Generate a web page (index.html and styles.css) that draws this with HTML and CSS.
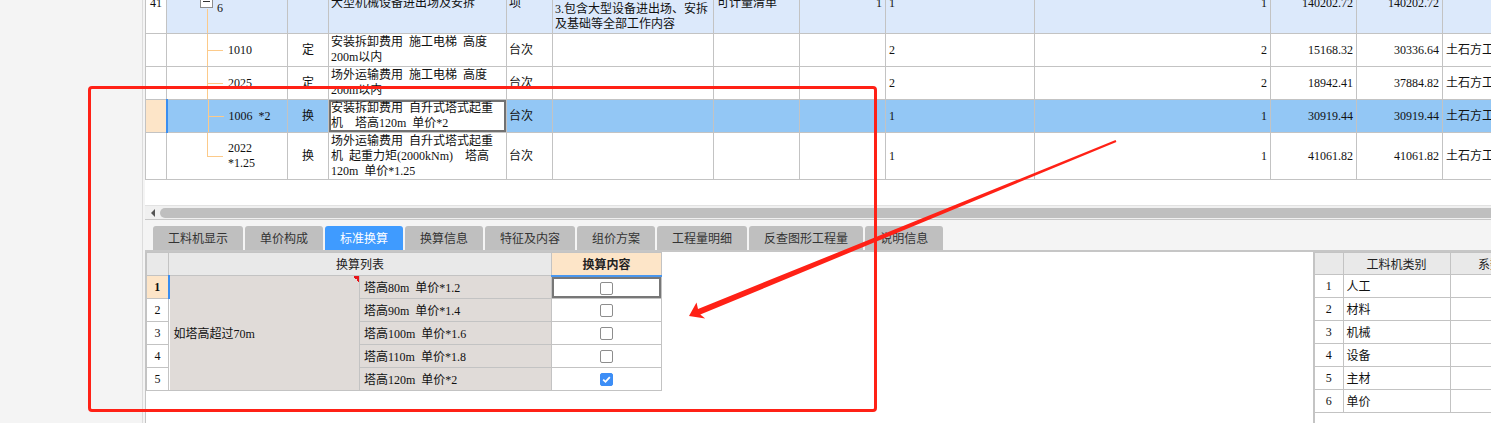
FILE: index.html
```html
<!DOCTYPE html>
<html lang="zh-CN">
<head>
    <meta charset="UTF-8">
    <title>标准换算</title>
    <link rel="stylesheet" href="styles.css">
</head>
<body>
<div class="app">
    <div class="side"></div>

    <div class="main">
        <div class="grid-top">
            <table class="sheet">
                <colgroup>
                    <col class="c-no"><col class="c-code"><col class="c-type"><col class="c-name">
                    <col class="c-unit"><col class="c-desc"><col class="c-spec"><col class="c-qty0">
                    <col class="c-expr"><col class="c-qty"><col class="c-price"><col class="c-total">
                    <col class="c-major">
                </colgroup>
                <tr class="r-group">
                    <td class="rn">41</td>
                    <td class="code root"><div class="tree-root"><span class="fold"></span><span class="root-tail">6</span></div></td>
                    <td></td>
                    <td>大型机械设备进出场及安拆</td>
                    <td>项</td>
                    <td class="desc">2.大型机械设备进出场<br>3.包含大型设备进出场、安拆<br>及基础等全部工作内容</td>
                    <td class="spec">可计量清单</td>
                    <td class="num">1</td>
                    <td class="expr">1</td>
                    <td class="num">1</td>
                    <td class="num">140202.72</td>
                    <td class="num">140202.72</td>
                    <td></td>
                </tr>
                <tr class="r-item">
                    <td class="rn"></td>
                    <td class="code branch">1010</td>
                    <td class="type">定</td>
                    <td>安装拆卸费用 施工电梯 高度<br>200m以内</td>
                    <td>台次</td>
                    <td></td><td></td><td></td>
                    <td class="expr">2</td>
                    <td class="num">2</td>
                    <td class="num">15168.32</td>
                    <td class="num">30336.64</td>
                    <td class="major">土石方工程</td>
                </tr>
                <tr class="r-item">
                    <td class="rn"></td>
                    <td class="code branch">2025</td>
                    <td class="type">定</td>
                    <td>场外运输费用 施工电梯 高度<br>200m以内</td>
                    <td>台次</td>
                    <td></td><td></td><td></td>
                    <td class="expr">2</td>
                    <td class="num">2</td>
                    <td class="num">18942.41</td>
                    <td class="num">37884.82</td>
                    <td class="major">土石方工程</td>
                </tr>
                <tr class="r-item r-sel">
                    <td class="rn rn-cur"></td>
                    <td class="code branch">1006 *2</td>
                    <td class="type">换</td>
                    <td class="editing">安装拆卸费用 自升式塔式起重<br>机&nbsp; 塔高120m 单价*2</td>
                    <td>台次</td>
                    <td></td><td></td><td></td>
                    <td class="expr">1</td>
                    <td class="num">1</td>
                    <td class="num">30919.44</td>
                    <td class="num">30919.44</td>
                    <td class="major">土石方工程</td>
                </tr>
                <tr class="r-tall">
                    <td class="rn"></td>
                    <td class="code branch-last">2022<br>*1.25</td>
                    <td class="type">换</td>
                    <td>场外运输费用 自升式塔式起重<br>机 起重力矩(2000kNm)&nbsp; 塔高<br>120m 单价*1.25</td>
                    <td>台次</td>
                    <td></td><td></td><td></td>
                    <td class="expr">1</td>
                    <td class="num">1</td>
                    <td class="num">41061.82</td>
                    <td class="num">41061.82</td>
                    <td class="major">土石方工程</td>
                </tr>
            </table>
        </div>

        <div class="hscroll">
            <span class="hs-left"></span>
            <span class="hs-thumb"></span>
        </div>

        <div class="tabs">
            <span class="tab">工料机显示</span>
            <span class="tab">单价构成</span>
            <span class="tab active">标准换算</span>
            <span class="tab">换算信息</span>
            <span class="tab">特征及内容</span>
            <span class="tab">组价方案</span>
            <span class="tab">工程量明细</span>
            <span class="tab">反查图形工程量</span>
            <span class="tab">说明信息</span>
        </div>

        <div class="lower">
            <div class="lower-left">
                <table class="conv">
                    <colgroup>
                        <col class="cv-no"><col class="cv-group"><col class="cv-item"><col class="cv-check">
                    </colgroup>
                    <tr>
                        <th></th>
                        <th colspan="2">换算列表</th>
                        <th class="th-cur">换算内容</th>
                    </tr>
                    <tr>
                        <td class="rn rn-cur">1</td>
                        <td class="group" rowspan="5">如塔高超过70m</td>
                        <td class="item">塔高80m 单价*1.2</td>
                        <td class="check cell-cur"><span class="box"></span></td>
                    </tr>
                    <tr>
                        <td class="rn">2</td>
                        <td class="item">塔高90m 单价*1.4</td>
                        <td class="check"><span class="box"></span></td>
                    </tr>
                    <tr>
                        <td class="rn">3</td>
                        <td class="item">塔高100m 单价*1.6</td>
                        <td class="check"><span class="box"></span></td>
                    </tr>
                    <tr>
                        <td class="rn">4</td>
                        <td class="item">塔高110m 单价*1.8</td>
                        <td class="check"><span class="box"></span></td>
                    </tr>
                    <tr>
                        <td class="rn">5</td>
                        <td class="item">塔高120m 单价*2</td>
                        <td class="check">
                            <span class="box on">
                                <svg width="11" height="11" viewBox="0 0 11 11"><path d="M2.2 5.6 L4.5 7.8 L8.8 3.2" fill="none" stroke="#fff" stroke-width="1.8"/></svg>
                            </span>
                        </td>
                    </tr>
                </table>
            </div>

            <div class="lower-right">
                <table class="kind">
                    <colgroup>
                        <col class="k-no"><col class="k-name"><col class="k-rate">
                    </colgroup>
                    <tr><th></th><th>工料机类别</th><th>系数</th></tr>
                    <tr><td class="rn">1</td><td>人工</td><td></td></tr>
                    <tr><td class="rn">2</td><td>材料</td><td></td></tr>
                    <tr><td class="rn">3</td><td>机械</td><td></td></tr>
                    <tr><td class="rn">4</td><td>设备</td><td></td></tr>
                    <tr><td class="rn">5</td><td>主材</td><td></td></tr>
                    <tr><td class="rn">6</td><td>单价</td><td></td></tr>
                </table>
            </div>
        </div>
    </div>

    <!-- red markup drawn over the screenshot -->
    <div class="mark-box"></div>
    <svg class="mark-arrow" width="1491" height="423" viewBox="0 0 1491 423">
        <polygon points="689,316 696.5,302.6 698,309 1115.6,140.1 1116.4,141.9 700.3,314.6 705.2,318.5" fill="#ff2116"/>
    </svg>
</div>
</body>
</html>
```

FILE: styles.css
```css
* {
    margin: 0;
    padding: 0;
    box-sizing: border-box;
}

body {
    width: 1491px;
    height: 423px;
    overflow: hidden;
    background: #fff;
    color: #111;
    font-family: "Liberation Serif", "Noto Sans CJK SC", serif;
    font-size: 12px;
}

.app {
    position: relative;
    display: flex;
    height: 423px;
}

.side {
    width: 145px;
    flex-shrink: 0;
    background: linear-gradient(to right, #f4f4f4 142px, #dcdcdc 142px, #dcdcdc 143px, #f4f4f4 143px);
}

.main {
    flex: 1;
    min-width: 0;
    display: flex;
    flex-direction: column;
    overflow: hidden;
}

/* ---------- top sheet ---------- */

.grid-top {
    height: 205px;
    flex-shrink: 0;
    overflow: hidden;
}

.sheet {
    border-collapse: collapse;
    table-layout: fixed;
    width: 1377px;
    margin-top: -27px;
    word-spacing: 3px;
}

.c-no { width: 21px; }
.c-code { width: 121px; }
.c-type { width: 41px; }
.c-name { width: 178px; }
.c-unit { width: 46px; }
.c-desc { width: 161px; }
.c-spec { width: 86px; }
.c-qty0 { width: 86px; }
.c-expr { width: 149px; }
.c-qty { width: 236px; }
.c-price { width: 86px; }
.c-total { width: 86px; }
.c-major { width: 80px; }

.sheet td {
    border: 1px solid #c3c3c3;
    padding: 0 2px;
    line-height: 15px;
    white-space: nowrap;
    overflow: hidden;
    vertical-align: middle;
}

.r-group { height: 60px; }
.r-item { height: 33px; }
.r-tall { height: 47px; }

.r-group td { background-color: #dce9fb; }
.r-sel td { background-color: #93c7f5; }

.sheet .rn {
    background-color: #fff;
    text-align: center;
    padding: 0;
}

.sheet .rn-cur {
    background-color: #fde5c8;
    border-right: 2px solid #3b8ef0;
}

.code {
    padding-left: 61px !important;
    background-repeat: no-repeat;
}

.code.root {
    padding: 0 0 17px 0 !important;
    vertical-align: bottom;
    background-image: linear-gradient(#fcca8a, #fcca8a);
    background-position: 40px 35px;
    background-size: 1px 25px;
}

.tree-root {
    display: flex;
    align-items: flex-end;
    padding-left: 33px;
}

.fold {
    width: 13px;
    height: 13px;
    margin-bottom: 8px;
    border: 1px solid #8c8c8c;
    background: #fff linear-gradient(#333, #333) center / 7px 1px no-repeat;
}

.root-tail {
    margin-left: 4px;
    line-height: 16px;
}

.code.branch {
    background-image: linear-gradient(#fcca8a, #fcca8a), linear-gradient(#fcca8a, #fcca8a);
    background-position: 40px 0, 40px 50%;
    background-size: 1px 100%, 16px 1px;
}

.code.branch-last {
    background-image: linear-gradient(#fcca8a, #fcca8a), linear-gradient(#fcca8a, #fcca8a);
    background-position: 40px 0, 40px 50%;
    background-size: 1px 50%, 16px 1px;
}

.type { text-align: center; }

.desc {
    vertical-align: bottom !important;
    padding-bottom: 1px !important;
}

.spec { padding-left: 3px !important; }
.expr { padding-left: 3px !important; }
.major { padding-left: 3px !important; }

.num {
    text-align: right;
    padding-right: 3px !important;
}

.sheet td.editing {
    background-color: #fff;
    box-shadow: inset 0 0 0 2px #727272;
}

/* ---------- scrollbar + tabs ---------- */

.hscroll {
    height: 15px;
    flex-shrink: 0;
    display: flex;
    align-items: center;
    background: #f0f0f0;
    border-top: 1px solid #e2e2e2;
    border-bottom: 1px solid #c8c8c8;
}

.hs-left {
    width: 0;
    height: 0;
    margin: 0 5px 0 6px;
    border-top: 4px solid transparent;
    border-bottom: 4px solid transparent;
    border-right: 4px solid #555;
}

.hs-thumb {
    flex: 1;
    height: 10px;
    background: #bfbfbf;
    border-radius: 5px 0 0 5px;
}

.tabs {
    display: flex;
    gap: 2px;
    flex-shrink: 0;
    padding: 6px 0 0 8px;
    background: #f4f4f4;
    border-bottom: 2px solid #c6c6c6;
}

.tab {
    height: 24px;
    line-height: 24px;
    padding: 0 15px;
    background: #bfbfbf;
    border-radius: 3px 3px 0 0;
    color: #333;
    font-family: "Noto Sans CJK SC", sans-serif;
    font-size: 12px;
    white-space: nowrap;
}

.tab.active {
    background: #3f9bff;
    color: #fff;
}

/* ---------- lower panels ---------- */

.lower {
    flex: 1;
    min-height: 0;
    display: flex;
}

.lower-left {
    width: 1168px;
    flex-shrink: 0;
    border-left: 1px solid #c4c4c4;
}

.lower-right {
    flex: 1;
    min-width: 0;
    overflow: hidden;
    border-left: 2px solid #c4c4c4;
}

.conv,
.kind {
    border-collapse: collapse;
    table-layout: fixed;
    word-spacing: 3px;
}

.conv { width: 515px; }
.cv-no { width: 22px; }
.cv-group { width: 191px; }
.cv-item { width: 192px; }
.cv-check { width: 110px; }

.conv th,
.conv td,
.kind th,
.kind td {
    border: 1px solid #c3c3c3;
    height: 23px;
    padding: 0 4px;
    white-space: nowrap;
    overflow: hidden;
    font-weight: normal;
    vertical-align: middle;
}

.conv th,
.kind th {
    background: #e9e9e9;
    color: #222;
}

.conv .th-cur {
    background: #fde5c8;
    font-weight: bold;
    border-bottom: 2px solid #4a97ee;
}

.conv .rn,
.kind .rn {
    padding: 0;
    text-align: center;
    background: #fff;
}

.conv .rn-cur {
    background: #fde5c8;
    font-weight: bold;
    border-right: 2px solid #3b8ef0;
}

.conv .group {
    background: #e0dbd8 linear-gradient(to bottom left, #e8141a 50%, transparent 50%) top right / 6px 6px no-repeat;
}

.conv .item {
    background: #e0dbd8;
}

.conv .check {
    text-align: center;
    padding: 0;
}

.conv .cell-cur {
    box-shadow: inset 0 0 0 2px #777;
}

.box {
    display: inline-block;
    width: 13px;
    height: 13px;
    border: 1px solid #8d8d8d;
    border-radius: 2px;
    background: #fff;
    vertical-align: middle;
}

.box.on {
    background: #3d8ef6;
    border-color: #3d8ef6;
}

.box svg {
    display: block;
}

.kind { width: 215px; }
.k-no { width: 28px; }
.k-name { width: 107px; }
.k-rate { width: 80px; }

.kind th { height: 22px; text-align: center; }
.kind td { padding-left: 3px; }
.kind tr > :first-child { border-left: none; }

/* ---------- red markup ---------- */

.mark-box {
    position: absolute;
    left: 88px;
    top: 86px;
    width: 789px;
    height: 326px;
    border: 3px solid #ff2116;
    border-radius: 4px;
    pointer-events: none;
}

.mark-arrow {
    position: absolute;
    left: 0;
    top: 0;
    pointer-events: none;
}
```
